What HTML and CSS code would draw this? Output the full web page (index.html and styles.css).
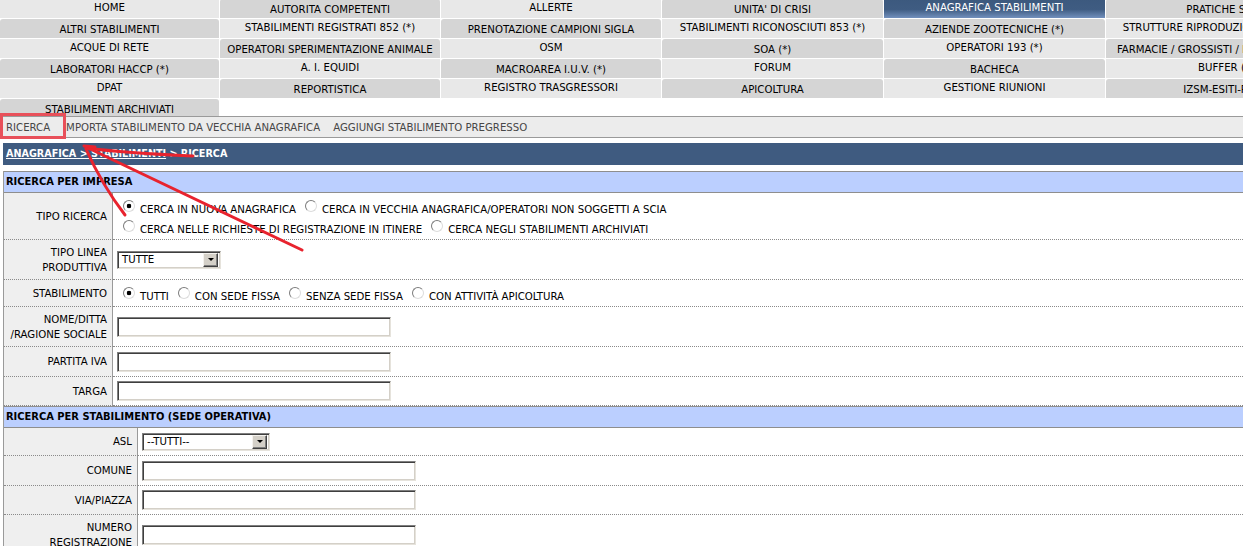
FILE: index.html
```html
<!DOCTYPE html>
<html lang="it">
<head>
<meta charset="utf-8">
<title>Anagrafica Stabilimenti - Ricerca</title>
<link rel="stylesheet" href="styles.css">
</head>
<body>
<nav class="tabs">
  <a class="tab lt">HOME</a>
  <a class="tab dk">AUTORITA COMPETENTI</a>
  <a class="tab lt">ALLERTE</a>
  <a class="tab dk">UNITA' DI CRISI</a>
  <a class="tab sel">ANAGRAFICA STABILIMENTI</a>
  <a class="tab dk">PRATICHE SUAP</a>

  <a class="tab dk">ALTRI STABILIMENTI</a>
  <a class="tab lt">STABILIMENTI REGISTRATI 852 (*)</a>
  <a class="tab dk">PRENOTAZIONE CAMPIONI SIGLA</a>
  <a class="tab lt">STABILIMENTI RICONOSCIUTI 853 (*)</a>
  <a class="tab dk">AZIENDE ZOOTECNICHE (*)</a>
  <a class="tab lt">STRUTTURE RIPRODUZIONE ANIMALE (*)</a>

  <a class="tab lt">ACQUE DI RETE</a>
  <a class="tab dk">OPERATORI SPERIMENTAZIONE ANIMALE</a>
  <a class="tab lt">OSM</a>
  <a class="tab dk">SOA (*)</a>
  <a class="tab lt">OPERATORI 193 (*)</a>
  <a class="tab dk">FARMACIE / GROSSISTI / PARAFARMACIE (*)</a>

  <a class="tab dk">LABORATORI HACCP (*)</a>
  <a class="tab lt">A. I. EQUIDI</a>
  <a class="tab dk">MACROAREA I.U.V. (*)</a>
  <a class="tab lt">FORUM</a>
  <a class="tab dk">BACHECA</a>
  <a class="tab lt">BUFFER (*)</a>

  <a class="tab lt">DPAT</a>
  <a class="tab dk">REPORTISTICA</a>
  <a class="tab lt">REGISTRO TRASGRESSORI</a>
  <a class="tab dk">APICOLTURA</a>
  <a class="tab lt">GESTIONE RIUNIONI</a>
  <a class="tab dk">IZSM-ESITI-PNAA</a>

  <a class="tab dk">STABILIMENTI ARCHIVIATI</a>
</nav>

<div class="subnav">
  <a class="sub">RICERCA</a>
  <a class="sub">IMPORTA STABILIMENTO DA VECCHIA ANAGRAFICA</a>
  <a class="sub">AGGIUNGI STABILIMENTO PREGRESSO</a>
</div>

<div class="crumb"><a class="crumb-link">ANAGRAFICA &gt; STABILIMENTI</a> &gt; RICERCA</div>

<div class="form form-a">
  <div class="head">RICERCA PER IMPRESA</div>

  <div class="lbl">TIPO RICERCA</div>
  <div class="val stack">
    <div class="line">
      <span class="radio on"></span><span class="opt">CERCA IN NUOVA ANAGRAFICA</span>
      <span class="radio"></span><span class="opt">CERCA IN VECCHIA ANAGRAFICA/OPERATORI NON SOGGETTI A SCIA</span>
    </div>
    <div class="line">
      <span class="radio"></span><span class="opt">CERCA NELLE RICHIESTE DI REGISTRAZIONE IN ITINERE</span>
      <span class="radio"></span><span class="opt">CERCA NEGLI STABILIMENTI ARCHIVIATI</span>
    </div>
  </div>

  <div class="lbl">TIPO LINEA<br>PRODUTTIVA</div>
  <div class="val">
    <div class="select sel-a"><span class="sel-text">TUTTE</span><span class="sel-btn"><span class="tri"></span></span></div>
  </div>

  <div class="lbl">STABILIMENTO</div>
  <div class="val stack">
    <div class="line">
      <span class="radio on"></span><span class="opt">TUTTI</span>
      <span class="radio"></span><span class="opt">CON SEDE FISSA</span>
      <span class="radio"></span><span class="opt">SENZA SEDE FISSA</span>
      <span class="radio"></span><span class="opt">CON ATTIVITÀ APICOLTURA</span>
    </div>
  </div>

  <div class="lbl">NOME/DITTA<br>/RAGIONE SOCIALE</div>
  <div class="val"><span class="input"></span></div>

  <div class="lbl">PARTITA IVA</div>
  <div class="val"><span class="input"></span></div>

  <div class="lbl">TARGA</div>
  <div class="val"><span class="input"></span></div>
</div>

<div class="form form-b">
  <div class="head">RICERCA PER STABILIMENTO (SEDE OPERATIVA)</div>

  <div class="lbl">ASL</div>
  <div class="val">
    <div class="select sel-b"><span class="sel-text">--TUTTI--</span><span class="sel-btn"><span class="tri"></span></span></div>
  </div>

  <div class="lbl">COMUNE</div>
  <div class="val"><span class="input"></span></div>

  <div class="lbl">VIA/PIAZZA</div>
  <div class="val"><span class="input"></span></div>

  <div class="lbl">NUMERO<br>REGISTRAZIONE</div>
  <div class="val"><span class="input"></span></div>
</div>

<div class="mark"></div>
<svg class="ink" width="1243" height="546" viewBox="0 0 1243 546" aria-hidden="true">
  <path d="M86 148 Q 125 153 193 156" />
  <path d="M86 149 Q 102 185 125 215" />
  <path d="M88 148 L 302 250" />
  <path d="M84 146 L 95 147" />
</svg>
</body>
</html>
```

FILE: styles.css
```css
* { box-sizing: border-box; }

html, body { margin: 0; padding: 0; }

body {
  position: relative;
  width: 1243px;
  height: 546px;
  overflow: hidden;
  background: #ffffff;
  color: #000000;
  font-family: "DejaVu Sans Condensed", Roboto, "Liberation Sans", sans-serif;
  font-size: 11.3px;
}

/* ---------- top menu ---------- */
.tabs {
  display: grid;
  grid-template-columns: 219px 220px 220px 221px 221px 240px;
  grid-template-rows: repeat(5, 19px) 17px;
  gap: 1px;
  margin-top: -1px;
}

.tab {
  display: block;
  text-align: center;
  white-space: nowrap;
  line-height: 14px;
  color: #000;
  text-decoration: none;
}

.lt { background: #e8e8e8; padding-top: 2px; }
.dk { background: #d5d5d5; padding-top: 4px; border-radius: 3px 3px 0 0; }
.sel {
  background: linear-gradient(#3c597e 0%, #3f5c82 55%, #7290bd 100%);
  color: #ffffff;
  padding-top: 2px;
}

/* ---------- sub menu ---------- */
.subnav {
  display: flex;
  align-items: center;
  height: 22px;
  background: #ececec;
  border-top: 1px solid #9a9a9a;
  border-bottom: 1px solid #9a9a9a;
}

.sub {
  padding: 0 7px 0 6px;
  color: #474747;
  white-space: nowrap;
}

/* ---------- breadcrumb ---------- */
.crumb {
  margin: 5px 0 0 3px;
  height: 22px;
  line-height: 22px;
  padding-left: 3px;
  background: #3f5b80;
  color: #ffffff;
  font-size: 10.7px;
  font-weight: bold;
  white-space: nowrap;
}

.crumb-link { color: #ffffff; text-decoration: underline; }

/* ---------- forms ---------- */
.form {
  display: grid;
  margin-left: 3px;
  border-left: 1px solid #9a9a9a;
}

.form-a {
  margin-top: 6px;
  grid-template-columns: 109px 1fr;
  grid-template-rows: 22px 47px 40px 27px 40px 30px 29px;
}

.form-b {
  grid-template-columns: 134px 1fr;
  grid-template-rows: 22px 28px 30px 29px 40px;
}

.head {
  grid-column: 1 / -1;
  background: #bbcfff;
  border-top: 1px solid #8e8e8e;
  border-bottom: 1px solid #8e8e8e;
  padding-left: 2px;
  line-height: 20px;
  font-size: 11px;
  font-weight: bold;
  white-space: nowrap;
}

.lbl {
  display: flex;
  align-items: center;
  justify-content: flex-end;
  text-align: right;
  padding-right: 5px;
  line-height: 15px;
  background: #efefef;
  border-right: 1px solid #9a9a9a;
  border-bottom: 1px dotted #8a8a8a;
  white-space: nowrap;
}

.val {
  display: flex;
  align-items: center;
  padding-left: 4px;
  border-bottom: 1px dotted #8a8a8a;
  white-space: nowrap;
}

.val.stack {
  flex-direction: column;
  align-items: flex-start;
  justify-content: flex-start;
  padding-top: 6px;
}

.line {
  display: flex;
  align-items: center;
  height: 20px;
}

.radio {
  width: 12px;
  height: 12px;
  margin: 0 5px 7px 5px;
  border-radius: 50%;
  border: 1px solid;
  border-color: #7c7c7c #dcdcdc #dcdcdc #7c7c7c;
  background: #ffffff;
  flex: none;
}

.line .radio:first-child { margin-left: 6px; }

.radio.on {
  background: radial-gradient(circle, #000000 0 2px, #ffffff 2.6px);
}

.opt { margin-right: 4px; }

/* classic inset controls */
.input {
  display: block;
  width: 274px;
  height: 20px;
  background: #ffffff;
  border: 1px solid;
  border-color: #7f7f7f #e6e3dc #e6e3dc #7f7f7f;
  box-shadow: inset 1px 1px 0 #3f3f3f, inset -1px -1px 0 #d4d0c8;
}

.select {
  display: flex;
  align-items: center;
  height: 18px;
  background: #ffffff;
  border: 1px solid;
  border-color: #7f7f7f #e6e3dc #e6e3dc #7f7f7f;
  box-shadow: inset 1px 1px 0 #3f3f3f, inset -1px -1px 0 #d4d0c8;
  padding: 1px 1px 1px 4px;
}

.sel-a { width: 104px; }
.sel-b { width: 128px; }

.sel-text { flex: 1; line-height: 14px; }

.sel-btn {
  display: flex;
  align-items: center;
  justify-content: center;
  width: 15px;
  height: 14px;
  margin-right: 1px;
  background: #d4d0c8;
  border: 1px solid;
  border-color: #f4f2ee #404040 #404040 #f4f2ee;
  box-shadow: inset -1px -1px 0 #808080;
}

.tri {
  width: 0;
  height: 0;
  border-left: 3px solid transparent;
  border-right: 3px solid transparent;
  border-top: 3px solid #000000;
}

/* ---------- hand-drawn annotation overlay ---------- */
.mark {
  position: absolute;
  left: 0;
  top: 113px;
  width: 66px;
  height: 26px;
  border: 3px solid #e8505a;
}

.ink {
  position: absolute;
  left: 0;
  top: 0;
  pointer-events: none;
  fill: none;
  stroke: #e8232e;
  stroke-width: 3;
  stroke-linecap: round;
  stroke-linejoin: round;
}
```
